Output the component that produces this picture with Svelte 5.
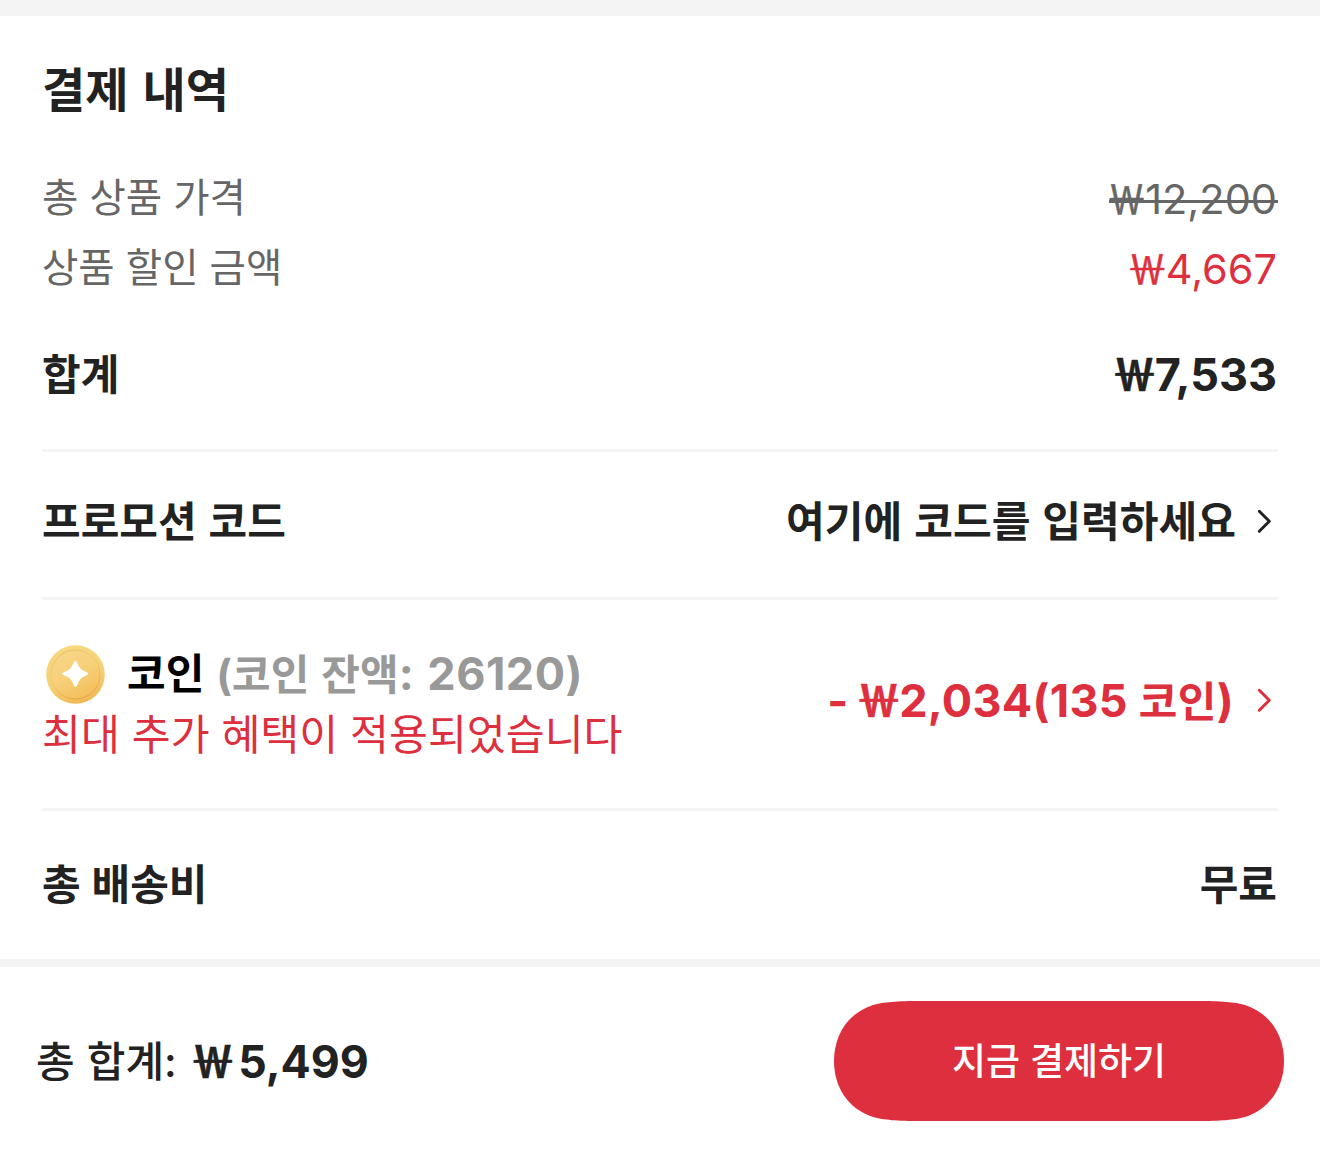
<script>
  const prices = [
    { label: '총 상품 가격', value: '12,200', kind: 'struck' },
    { label: '상품 할인 금액', value: '4,667', kind: 'discount' }
  ];
</script>

{#snippet chevron()}
  <svg class="chevron" viewBox="0 0 16 26" aria-hidden="true">
    <path d="M3.3 2.3 L13.3 12.3 L3.3 22.3" />
  </svg>
{/snippet}

<main>
  <section class="summary">
    <h1>결제 내역</h1>

    {#each prices as price}
      <div class="price">
        <span class="label">{price.label}</span>
        <span class="amount {price.kind}"><span class="won">₩</span>{price.value}</span>
      </div>
    {/each}

    <div class="row subtotal">
      <span>합계</span>
      <span class="money"><span class="won">₩</span>7,533</span>
    </div>

    <div class="row promo">
      <span>프로모션 코드</span>
      <span class="link"><span class="hint">여기에 코드를 입력하세요</span>{@render chevron()}</span>
    </div>

    <div class="row coins">
      <div class="coin-info">
        <div class="coin-title">
          <svg class="coin" viewBox="0 0 60 60" aria-hidden="true">
            <defs>
              <linearGradient id="rim" x1="0.3" y1="0" x2="0.6" y2="1">
                <stop offset="0" stop-color="#f6d97e" />
                <stop offset="0.6" stop-color="#f5cf76" />
                <stop offset="1" stop-color="#f0b853" />
              </linearGradient>
              <linearGradient id="face" x1="0.2" y1="0" x2="0.7" y2="1">
                <stop offset="0" stop-color="#f8d68a" />
                <stop offset="0.5" stop-color="#f7d078" />
                <stop offset="1" stop-color="#f4be5a" />
              </linearGradient>
              <linearGradient id="edge" x1="0" y1="0" x2="0.4" y2="1">
                <stop offset="0" stop-color="#e6b968" />
                <stop offset="0.5" stop-color="#f3cb74" />
                <stop offset="1" stop-color="#e3a443" />
              </linearGradient>
            </defs>
            <circle cx="30.5" cy="30.5" r="29.3" fill="url(#rim)" />
            <circle cx="30.5" cy="30.5" r="24.5" fill="url(#face)" stroke="url(#edge)" stroke-width="1" />
            <path
              d="M30 17 Q31.5 16.5 32.5 19.5 Q34.5 26 41 27.8 Q43.5 28.8 43 30 Q42.8 31.2 40.5 32 Q34.5 34 32.7 40 Q31.7 43 30.3 43 Q29 42.8 28.2 40 Q26.5 34 20 31.8 Q17 30.8 17 29.8 Q17.3 28.5 20 27.7 Q26 26 28 20 Q28.8 17.3 30 17 Z"
              fill="#fff"
            />
          </svg>
          <span class="coin-name">코인</span>
          <span class="balance">(코인 잔액<span class="num">: 26120)</span></span>
        </div>
        <div class="benefit">최대 추가 혜택이 적용되었습니다</div>
      </div>
      <span class="link red">
        <span class="money">- <span class="won">₩</span>2,034(135 <span class="unit">코인</span>)</span>{@render chevron()}
      </span>
    </div>

    <div class="row shipping">
      <span>총 배송비</span>
      <span class="fee">무료</span>
    </div>
  </section>

  <footer>
    <div class="total">
      <span class="total-label">총 합계:</span>
      <span class="money"><span class="won">₩</span>5,499</span>
    </div>
    <button type="button">
      <svg class="pill" viewBox="0 0 450 120" aria-hidden="true">
        <path d="M88 0 C62 0 50 1 39 4 C14 12 0 34 0 60 C0 86 14 108 39 116 C50 119 62 120 88 120 H362 C388 120 400 119 411 116 C436 108 450 86 450 60 C450 34 436 12 411 4 C400 1 388 0 362 0 Z" />
      </svg>
      <span class="pay">지금 결제하기</span>
    </button>
  </footer>
</main>

<style>
  :global(body) {
    margin: 0;
    background: #fff;
  }

  main {
    width: 1320px;
    height: 1172px;
    box-sizing: border-box;
    border-top: 16px solid #f4f4f4;
    background: #fff;
    color: #222;
    font-family: Inter, 'Noto Sans CJK KR', sans-serif;
    overflow: hidden;
  }

  .summary {
    height: 943px;
    box-sizing: border-box;
    padding: 39px 42px 0;
  }

  h1 {
    margin: 0 0 38px;
    height: 70px;
    font-size: 47px;
    line-height: 70px;
    font-weight: 700;
    word-spacing: 3px;
  }

  .price {
    display: flex;
    justify-content: space-between;
    height: 70px;
    line-height: 70px;
    color: #666;
  }

  .label {
    font-size: 39.5px;
    font-weight: 400;
  }

  .amount {
    padding: 1px 1px 0 0;
    font-size: 41.5px;
  }

  .won {
    margin: 0 -2px 0 -3px;
    font-family: 'Noto Sans CJK KR', sans-serif;
    font-variant-east-asian: full-width;
    font-size: 0.99em;
    line-height: 1;
    letter-spacing: 0;
    -webkit-text-stroke: 0.5px currentColor;
  }

  .struck {
    background: linear-gradient(#666, #666) 0 37px / 100% 3px no-repeat;
  }

  .discount {
    color: #dd2f3d;
  }

  .row {
    display: flex;
    justify-content: space-between;
    align-items: center;
    box-sizing: border-box;
    font-size: 42px;
    line-height: 60px;
    font-weight: 700;
    white-space: nowrap;
    word-spacing: 2px;
  }

  .subtotal {
    height: 149px;
    padding-bottom: 2px;
    border-bottom: 3px solid #f4f4f4;
  }

  .subtotal .money {
    margin-right: 1px;
  }

  .promo {
    height: 148px;
    padding-bottom: 6px;
    border-bottom: 3px solid #f4f4f4;
  }

  .coins {
    height: 211px;
    border-bottom: 3px solid #f4f4f4;
  }

  .shipping {
    height: 148px;
    word-spacing: 1px;
  }

  .fee {
    margin-right: 1px;
  }

  .money {
    font-size: 45px;
  }

  .link {
    display: flex;
    align-items: center;
    gap: 20px;
  }

  .hint {
    font-size: 42.1px;
  }

  .coins .link {
    gap: 22px;
    padding-bottom: 6px;
    word-spacing: 0;
  }

  .coins .link .money {
    letter-spacing: 0.3px;
  }

  .red,
  .benefit {
    color: #dd2f3d;
  }

  .unit {
    font-size: 42px;
  }

  .chevron {
    width: 16px;
    height: 26px;
    margin-right: 6px;
    fill: none;
    stroke: currentColor;
    stroke-width: 3;
    stroke-linecap: round;
    stroke-linejoin: round;
  }

  .coin-title {
    display: flex;
    align-items: center;
    height: 60px;
  }

  .coin {
    width: 60px;
    height: 60px;
    margin: 0 22px 0 3px;
  }

  .coin-name {
    margin-right: 12px;
    color: #000;
  }

  .balance {
    color: #999;
  }

  .num {
    font-size: 45px;
    letter-spacing: 0.5px;
  }

  .benefit {
    height: 59px;
    padding-top: 1px;
    font-size: 42.3px;
    font-weight: 400;
    word-spacing: 0;
  }

  footer {
    display: flex;
    justify-content: space-between;
    align-items: center;
    box-sizing: border-box;
    height: 213px;
    padding: 0 36px 17px;
    border-top: 8px solid #f4f4f4;
  }

  .total {
    display: flex;
    align-items: center;
    gap: 17px;
    padding-top: 1px;
    font-size: 42px;
    line-height: 60px;
    font-weight: 700;
  }

  .total .money {
    font-size: 44.7px;
  }

  .total .won {
    margin-right: 3px;
  }

  .total-label {
    font-weight: 500;
    word-spacing: 1px;
  }

  button {
    position: relative;
    width: 450px;
    height: 120px;
    padding: 2px 0 0;
    border: 0;
    background: none;
    color: #fff;
    font: 500 37px/56px Inter, 'Noto Sans CJK KR', sans-serif;
  }

  .pill {
    position: absolute;
    inset: 0;
    width: 100%;
    height: 100%;
    fill: #dd2f3d;
  }

  .pay {
    position: relative;
  }
</style>
